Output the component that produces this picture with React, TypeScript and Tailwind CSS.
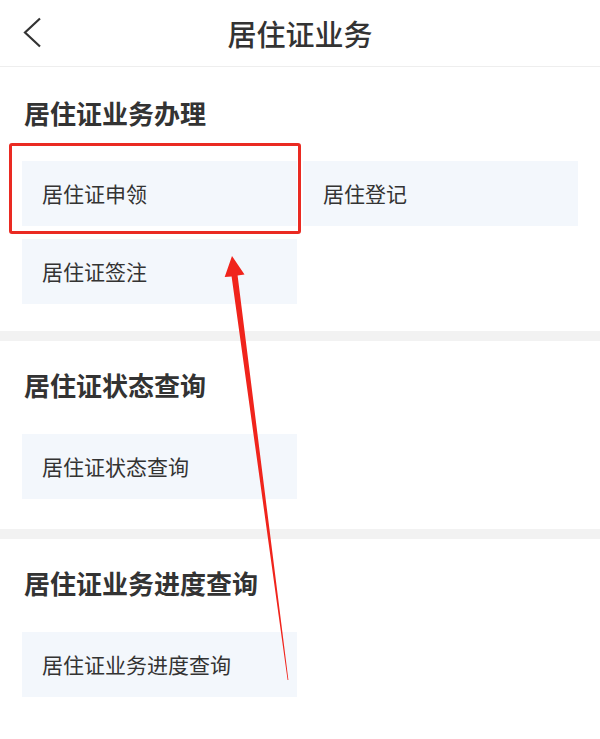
import React from "react";

const font = {
  fontFamily: '"Noto Sans CJK SC", "Noto Sans", sans-serif',
};

const Tile = ({ label }: { label: string }) => (
  <div className="h-[65px] bg-[#f3f7fc] flex items-center pl-[20px] text-[21px] text-[#333333]">
    {label}
  </div>
);

const Section = ({
  title,
  items,
  spacing,
}: {
  title: string;
  items: string[];
  spacing: string;
}) => (
  <div className={`px-[22px] ${spacing}`}>
    <div className="pl-[2px] text-[26px] leading-[36px] font-bold text-[#333333]">
      {title}
    </div>
    <div className="grid grid-cols-2 gap-x-[6px] gap-y-[13px] mt-[var(--gap)]">
      {items.map((item) => (
        <Tile key={item} label={item} />
      ))}
    </div>
  </div>
);

export default function App() {
  return (
    <div className="relative w-[600px] h-[739px] bg-white overflow-hidden" style={font}>
      <div className="relative h-[67px] border-b border-[#eeeeee] flex items-center justify-center">
        <svg
          className="absolute left-[22px] top-[17px]"
          width="20"
          height="31"
          viewBox="0 0 20 31"
          fill="none"
        >
          <path d="M18 1.5 L3 15.5 L18 29.5" stroke="#333333" strokeWidth="2.2" />
        </svg>
        <div className="text-[29px] font-medium text-[#333333] leading-none">
          居住证业务
        </div>
      </div>

      <Section
        title="居住证业务办理"
        items={["居住证申领", "居住登记", "居住证签注"]}
        spacing="pt-[28px] pb-[27px] [--gap:30px]"
      />
      <div className="h-[10px] bg-[#f2f2f2]" />
      <Section
        title="居住证状态查询"
        items={["居住证状态查询"]}
        spacing="pt-[26px] pb-[30px] [--gap:31px]"
      />
      <div className="h-[10px] bg-[#f2f2f2]" />
      <Section
        title="居住证业务进度查询"
        items={["居住证业务进度查询"]}
        spacing="pt-[26px] pb-[30px] [--gap:31px]"
      />

      {/* annotation overlay */}
      <div className="absolute left-[9px] top-[143px] w-[292px] h-[91px] border-[3px] border-[#ea2a22] rounded-[3px]" />
      <svg className="absolute left-0 top-0" width="600" height="739">
        <polygon
          points="232,256 244.5,274.5 237.6,275.6 288.4,680 287.6,680 231.6,276.4 224.7,277.1"
          fill="#f0241c"
        />
      </svg>
    </div>
  );
}
